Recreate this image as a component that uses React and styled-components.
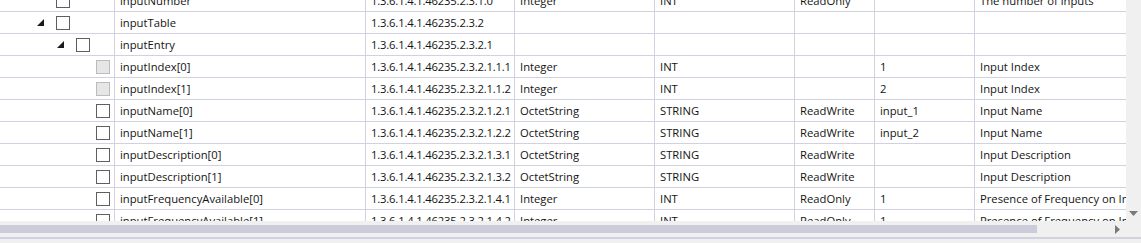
import React from "react";
import styled, { createGlobalStyle } from "styled-components";

const GlobalStyle = createGlobalStyle`
    html, body {
        margin: 0;
        padding: 0;
        background: #ffffff;
    }
    body {
        font-family: "Segoe UI", "Open Sans", "Noto Sans", sans-serif;
        font-size: 11.25px;
        color: #141414;
    }
`;

const LINE = "#d2d1e1";

const BASE = "1.3.6.1.4.1.46235.2.3";
const rows = [
    { level: 1, name: "inputNumber", oid: `${BASE}.1.0`, type: "Integer", syntax: "INT", access: "ReadOnly", value: "", desc: "The number of inputs" },
    { level: 1, name: "inputTable", oid: `${BASE}.2`, expanded: true },
    { level: 2, name: "inputEntry", oid: `${BASE}.2.1`, expanded: true },
    { level: 3, name: "inputIndex[0]", oid: `${BASE}.2.1.1.1`, type: "Integer", syntax: "INT", access: "", value: "1", desc: "Input Index", disabled: true },
    { level: 3, name: "inputIndex[1]", oid: `${BASE}.2.1.1.2`, type: "Integer", syntax: "INT", access: "", value: "2", desc: "Input Index", disabled: true },
    { level: 3, name: "inputName[0]", oid: `${BASE}.2.1.2.1`, type: "OctetString", syntax: "STRING", access: "ReadWrite", value: "input_1", desc: "Input Name" },
    { level: 3, name: "inputName[1]", oid: `${BASE}.2.1.2.2`, type: "OctetString", syntax: "STRING", access: "ReadWrite", value: "input_2", desc: "Input Name" },
    { level: 3, name: "inputDescription[0]", oid: `${BASE}.2.1.3.1`, type: "OctetString", syntax: "STRING", access: "ReadWrite", value: "", desc: "Input Description" },
    { level: 3, name: "inputDescription[1]", oid: `${BASE}.2.1.3.2`, type: "OctetString", syntax: "STRING", access: "ReadWrite", value: "", desc: "Input Description" },
    { level: 3, name: "inputFrequencyAvailable[0]", oid: `${BASE}.2.1.4.1`, type: "Integer", syntax: "INT", access: "ReadOnly", value: "1", desc: "Presence of Frequency on Input" },
    { level: 3, name: "inputFrequencyAvailable[1]", oid: `${BASE}.2.1.4.2`, type: "Integer", syntax: "INT", access: "ReadOnly", value: "1", desc: "Presence of Frequency on Input" },
];

const columns = [
    { key: "name", width: 251 },
    { key: "oid", width: 149, tight: true },
    { key: "type", width: 140 },
    { key: "syntax", width: 140 },
    { key: "access", width: 80 },
    { key: "value", width: 100 },
    { key: "desc", width: 240 },
];

const Frame = styled.div`
    width: 1141px;
    height: 243px;
    overflow: hidden;
    display: flex;
    flex-direction: column;
    background: #f0f0f0;
`;

const Body = styled.div`
    display: flex;
    height: 221px;
    flex-shrink: 0;
`;

const Viewport = styled.div`
    flex: 1;
    overflow: hidden;
    background: #ffffff;
`;

const RowList = styled.div`
    margin-top: -10px;
`;

const Row = styled.div`
    display: flex;
    height: 22px;
    box-sizing: border-box;
    border-bottom: 1px solid ${LINE};
    width: max-content;
`;

const Cell = styled.div`
    flex: 0 0 ${(p) => p.$width}px;
    box-sizing: border-box;
    border-right: 1px solid ${LINE};
    padding-left: 5px;
    line-height: 22px;
    white-space: nowrap;
    overflow: hidden;
    letter-spacing: ${(p) => (p.$tight ? "-0.17px" : "normal")};
`;

const TreeCell = styled.div`
    flex: 0 0 115px;
    box-sizing: border-box;
    border-right: 1px solid ${LINE};
    display: flex;
    align-items: center;
    padding-left: ${(p) => 16 + p.$level * 20}px;
`;

const Expander = styled.span`
    flex: 0 0 20px;
    height: 14px;
    display: flex;
    align-items: center;
    padding-left: 1px;
    box-sizing: border-box;
`;

const CheckBox = styled.span`
    flex: 0 0 14px;
    height: 14px;
    box-sizing: border-box;
    border: 1px solid ${(p) => (p.$disabled ? "#bcbcbc" : "#5f5f5f")};
    background: ${(p) => (p.$disabled ? "#e6e6e6" : "#ffffff")};
`;

const VScroll = styled.div`
    flex: 0 0 15px;
    background: #f0f0f0;
    display: flex;
    flex-direction: column;
    justify-content: flex-end;
    align-items: center;
    padding-bottom: 5px;
    box-sizing: border-box;
`;

const HScroll = styled.div`
    height: 16px;
    flex-shrink: 0;
    display: flex;
    align-items: center;
`;

const Thumb = styled.div`
    width: 1037px;
    height: 8px;
    background: #cccbda;
`;

const HArrow = styled.span`
    margin-left: 78px;
    display: flex;
    align-items: center;
`;

const BottomLine = styled.div`
    height: 2px;
    flex-shrink: 0;
    background: ${LINE};
`;

const Triangle = () => (
    <svg width="7" height="7" viewBox="0 0 7 7">
        <polygon points="7,0 7,7 0,7" fill="#1a1a1a" />
    </svg>
);

const App = () => (
    <>
        <GlobalStyle />
        <Frame>
            <Body>
                <Viewport>
                    <RowList>
                        {rows.map((r) => (
                            <Row key={r.oid}>
                                <TreeCell $level={r.level}>
                                    <Expander>{r.expanded && <Triangle />}</Expander>
                                    <CheckBox $disabled={r.disabled} />
                                </TreeCell>
                                {columns.map((c) => (
                                    <Cell key={c.key} $width={c.width} $tight={c.tight}>
                                        {r[c.key] || ""}
                                    </Cell>
                                ))}
                            </Row>
                        ))}
                    </RowList>
                </Viewport>
                <VScroll>
                    <svg width="9" height="5" viewBox="0 0 9 5">
                        <polygon points="0,0 9,0 4.5,5" fill="#7a7a7a" />
                    </svg>
                </VScroll>
            </Body>
            <HScroll>
                <Thumb />
                <HArrow>
                    <svg width="5" height="9" viewBox="0 0 5 9">
                        <polygon points="0,0 5,4.5 0,9" fill="#7a7a7a" />
                    </svg>
                </HArrow>
            </HScroll>
            <BottomLine />
        </Frame>
    </>
);

export default App;
